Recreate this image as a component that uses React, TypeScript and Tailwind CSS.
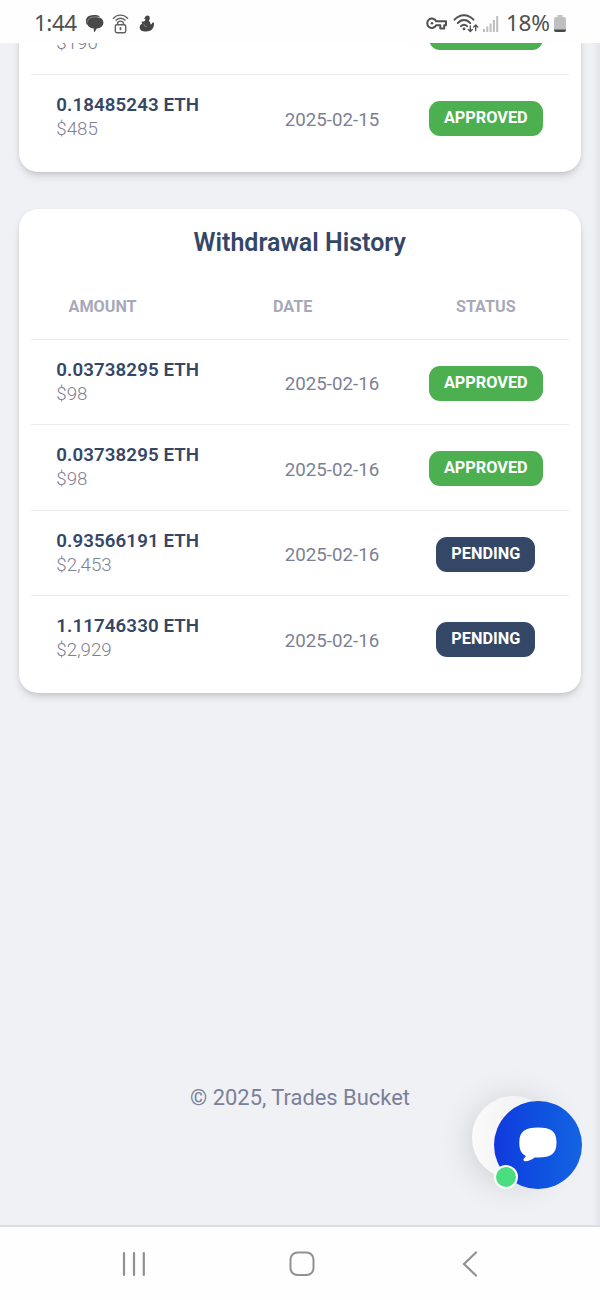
import React from 'react';
import clsx from 'clsx';

type Transaction = {
  amount?: string;
  value: string;
  date?: string;
  status: 'APPROVED' | 'PENDING' | '';
};

// first entry is scrolled under the status bar, only its last line is shown
const deposits: Transaction[] = [
  { value: '$190', status: '' },
  { amount: '0.18485243 ETH', value: '$485', date: '2025-02-15', status: 'APPROVED' },
];

const withdrawals: Transaction[] = [
  { amount: '0.03738295 ETH', value: '$98', date: '2025-02-16', status: 'APPROVED' },
  { amount: '0.03738295 ETH', value: '$98', date: '2025-02-16', status: 'APPROVED' },
  { amount: '0.93566191 ETH', value: '$2,453', date: '2025-02-16', status: 'PENDING' },
  { amount: '1.11746330 ETH', value: '$2,929', date: '2025-02-16', status: 'PENDING' },
];

const StatusBar = () => (
  <header className="flex h-[43px] shrink-0 items-center justify-between bg-[#fefefe] pr-[34px] pl-[34px] font-['Noto_Sans',sans-serif] text-[22.5px] leading-none text-[#505050]">
    <div className="flex items-center">
      <span className="mt-[3px] w-[51px] tracking-[-0.5px]">1:44</span>
      {/* chat bubbles */}
      <svg className="mt-[4px]" width="19" height="18" viewBox="0 0 19 18" fill="#484848">
        <path d="M2 10C-.2 6 1 2 4.500.7 8-.3 12.500-.2 15 1.500L10 3z" />
        <path d="M10.500 1.900c5 0 7.900 2.100 7.900 5.700 0 3.500-2.500 5.600-6.600 6L10 16.600c-.5.700-1.200.4-1.200-.4v-2.700C4.600 13 2.300 11 2.300 7.700c0-3.700 3-5.800 8.200-5.800z" />
        <path d="M2.300 7.500C2.500 3.800 5.500 1.900 10.500 1.900c1.800 0 3.300.3 4.600.9" fill="none" stroke="#b5b5b5" strokeWidth=".6" />
      </svg>
      {/* hotspot with lock */}
      <svg className="mt-[4px] ml-[8px]" width="17" height="20" viewBox="0 0 17 20" fill="none" stroke="#606060" strokeWidth="1.400">
        <path d="M1 4.700C5-.1 12-.1 16 4.700M3.600 6.600C6.500 3.500 10.500 3.500 13.400 6.600" />
        <path d="M5.600 10.800V9.500c0-3.200 5.800-3.200 5.800 0v1.300" />
        <rect x="3.300" y="10.800" width="10.400" height="7.900" rx="1.600" />
        <path d="M8.500 13.200v3" strokeWidth="1.700" />
      </svg>
      <svg className="mt-[3px] ml-[10px]" width="16" height="17" viewBox="0 0 16 17" fill="#444">
        <path d="M6.500 1.500C8-.3 11 .5 10.800 3.200c-.1 1.200-.6 1.900-1 2.600 1 .8 1.700 2.100 1.800 3.600 1-.2 1.500-.7 1.600-2l1.700.3c.3 2.400-.2 4.400-1.400 6C12.300 15.500 10 16.500 7 16.500c-4 0-6.200-1.200-6.300-4C.6 10.500 1.600 9.300 3.200 8.800L2.500 6.800 5.500 6.300 6.500 4.800 5.200 3.500z" />
        <path d="M5 8.800c-.2 2 1 3.200 3 2.600" fill="none" stroke="#999" strokeWidth=".7" />
      </svg>
    </div>
    <div className="flex items-center">
      {/* vpn key */}
      <svg className="mt-[4px]" width="21" height="13" viewBox="0 0 21 13" fill="none" stroke="#505050" strokeWidth="2" strokeLinejoin="round">
        <path d="M10.200 4.300H20v3.900h-1.800v3.200h-3.900V8.200h-4.100a4.700 4.700 0 1 1 0-3.900z" />
        <circle cx="6" cy="6.200" r="1.300" fill="#505050" stroke="none" />
      </svg>
      <svg className="mt-[4px] ml-[6px]" width="26" height="19" viewBox="0 0 26 19" fill="none" stroke="#505050" strokeWidth="1.900" strokeLinecap="round">
        <path d="M1.500 5.700C7-.2 15-.2 20.500 5.700M4.700 9.100C8.500 4.900 13.500 4.900 17.300 9.100M7.900 12.200c2-1.900 4.200-1.900 6.200 0" />
        <circle cx="11" cy="14.900" r="1.400" fill="#505050" stroke="none" />
        <path d="M17.300 12v5.500m-2-2 2 2 2-2M22.700 16.500v-5.500m-2 2 2-2 2 2" strokeWidth="1.300" />
      </svg>
      <svg className="mt-[4px] ml-[4px]" width="16" height="17" viewBox="0 0 16 17" fill="#bdbdbd">
        <rect x="0" y="14" width="2" height="3" />
        <rect x="3.300" y="11.500" width="2" height="5.500" />
        <rect x="6.600" y="8.500" width="2" height="8.500" />
        <rect x="9.900" y="5" width="2" height="12" />
        <rect x="13.200" y="1" width="2" height="16" />
      </svg>
      <span className="mt-[3px] ml-[7px] w-[48px] tracking-[-0.3px]">18%</span>
      <svg className="mt-[4px]" width="12" height="17" viewBox="0 0 12 17">
        <path d="M3.500 0h5v2H10q2 0 2 2v11q0 2-2 2H2q-2 0-2-2V4q0-2 2-2h1.500z" fill="#c0c0c0" />
        <path d="M0 14.500h12q0 2.500-2 2.500H2q-2 0-2-2.500z" fill="#484848" />
      </svg>
    </div>
  </header>
);

const TransactionRow = ({ amount, value, date, status }: Transaction) => (
  <div className="grid h-[85.5px] grid-cols-[228px_144px_165px] border-t border-[#ececee]">
    <div className="pt-[18px] pl-[25.3px]">
      <div className="h-6 text-[18.7px] leading-6 font-semibold tracking-[0.1px] text-[#344767]">{amount}</div>
      <div className="text-[18.7px] leading-[24.5px] font-light text-[#7e8092]">{value}</div>
    </div>
    <div className="pt-[32.8px] pl-[25.8px] text-[18.7px] leading-6 text-[#7d7f95]">{date}</div>
    <div className="flex items-start justify-center pt-[26px] pl-[0.6px]">
      <span
        className={clsx(
          'flex h-[35px] items-center rounded-[11px] px-[15px] text-[16.3px] font-bold text-white',
          status === 'PENDING' ? 'bg-[#344767]' : 'bg-[#4caf50]',
          !status && 'w-[114px]'
        )}
      >
        {status}
      </span>
    </div>
  </div>
);

const cardStyle =
  'mr-[19px] ml-[18.5px] rounded-[19px] bg-white px-[12.5px] shadow-[0_5px_8px_-1px_rgba(0,0,0,0.12),0_2px_5px_-1px_rgba(0,0,0,0.1)]';

const ChatButton = () => (
  <div className="absolute top-[1053px] left-[472px] h-[93px] w-[110px]">
    <div className="absolute top-0 left-0 size-[83px] rounded-full bg-linear-to-r from-[#fafafa] to-[#eeeeee] shadow-[0_4px_34px_rgba(0,0,0,0.16)]" />
    <button className="absolute top-[5px] left-[22px] flex size-[88px] items-center justify-center rounded-full bg-linear-to-r from-[#1238dd] to-[#1464e2]">
      <svg className="-mt-px -ml-px" width="38" height="35" viewBox="0 0 38 35" fill="#fff">
        <path d="M19 .5C32 .5 37.500 4 37.500 15.500S32 30.500 19 30.500h-3.500C13.500 32.500 9.500 34.200 6.500 34.200c-2.200 0-2.600-1.700-1.500-2.700 1-.9 1.600-1.700 1.700-2.700C2.500 27 .3 23 .3 15.500.3 4 6.500.5 19 .5z" />
      </svg>
    </button>
    <span className="absolute top-[69px] left-[22px] size-6 rounded-full border-[2.500px] border-white bg-[#4ade80]" />
  </div>
);

const NavigationBar = () => (
  <nav className="flex h-[75px] shrink-0 items-center justify-between border-t-2 border-[#dcdde0] bg-[#fefefe] pr-[122px] pl-[122px]">
    <svg width="24" height="26" viewBox="0 0 24 26" stroke="#919191" strokeWidth="2.200" strokeLinecap="round">
      <path d="M2 2v22M12 2v22M21.800 2v22" />
    </svg>
    <svg className="mr-[5px]" width="26" height="26" viewBox="0 0 26 26" fill="none" stroke="#919191" strokeWidth="2">
      <rect x="1.500" y="1.500" width="23" height="22.500" rx="7" />
    </svg>
    <svg width="16" height="26" viewBox="0 0 16 26" fill="none" stroke="#919191" strokeWidth="2.200" strokeLinecap="round">
      <path d="M14 1.500 2 13l12 11.500" />
    </svg>
  </nav>
);

export default function App() {
  return (
    <div className="flex h-[1300px] w-[600px] flex-col overflow-hidden bg-[#f0f1f5] font-['Roboto',sans-serif]">
      <StatusBar />
      <main className="relative flex-1 overflow-hidden">
        {/* page is scrolled, so the deposit card starts above the viewport */}
        <section className={clsx(cardStyle, '-mt-[54.6px] pb-[12.6px]')}>
          {deposits.map((item, i) => (
            <TransactionRow key={i} {...item} />
          ))}
        </section>

        <section className={clsx(cardStyle, 'mt-[37.4px] pb-[12.3px]')}>
          <h2 className="pt-[17px] text-center text-[25px] leading-[34px] font-semibold text-[#344767]">
            Withdrawal History
          </h2>
          <div className="grid h-[78.3px] grid-cols-[228px_144px_165px] pt-[35px] text-[16.2px] leading-6 font-bold text-[#a7a9bb]">
            <div className="pl-[37.5px]">AMOUNT</div>
            <div className="pl-[14px]">DATE</div>
            <div className="pl-[0.6px] text-center">STATUS</div>
          </div>
          {withdrawals.map((item, i) => (
            <TransactionRow key={i} {...item} />
          ))}
        </section>

        <footer className="mt-[388.8px] text-center text-[21.9px] leading-8 text-[#7b809a]">
          © 2025, Trades Bucket
        </footer>

        <div className="absolute inset-y-0 right-0 w-2 bg-linear-to-r from-transparent to-[#e4e5ea]" />
        <ChatButton />
      </main>
      <NavigationBar />
    </div>
  );
}
